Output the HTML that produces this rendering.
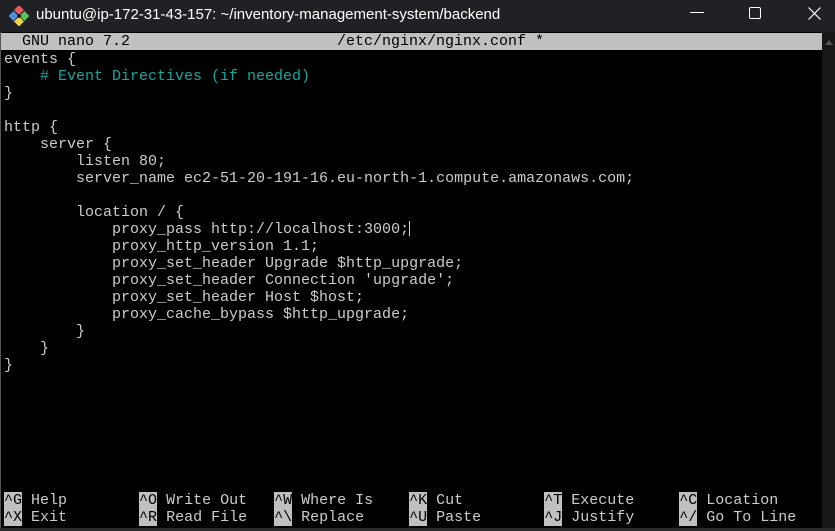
<!DOCTYPE html>
<html><head><meta charset="utf-8"><style>
*{margin:0;padding:0;box-sizing:border-box}
body{width:835px;height:531px;background:#0c0c0c;overflow:hidden;position:relative;font-family:"Liberation Sans",sans-serif}
.title{position:absolute;left:0;top:0;width:835px;height:32px;background:#202124;color:#fff;font-size:15px}
.title .t{position:absolute;left:36px;top:6px}
.term{position:absolute;left:0;top:32px;width:822px;height:496px;background:#000;border-left:1px solid #555}
.sb{position:absolute;left:822px;top:32px;width:13px;height:496px;background:#171717}
.m{font-family:"Liberation Mono",monospace;font-size:15px;line-height:17px;white-space:pre;color:#cccccc;position:absolute}
.hdr{position:absolute;left:1px;top:33px;width:821px;height:17px;background:#c0c0c0}
.k{background:#c0c0c0;color:#000}
.c{color:#13a89e}
</style></head><body>
<div class="title">
<svg style="position:absolute;left:9px;top:6px" width="20" height="20" viewBox="0 0 20 20">
<rect x="6.5" y="0.5" width="7" height="7" transform="rotate(45 10 4)" fill="#e85b5b"/>
<rect x="1" y="6.5" width="7" height="7" transform="rotate(45 4.5 10)" fill="#4a90e2"/>
<rect x="12" y="6.5" width="7" height="7" transform="rotate(45 15.5 10)" fill="#5cc25c"/>
<rect x="6.5" y="12" width="7" height="7" transform="rotate(45 10 15.5)" fill="#f5d547"/>
<circle cx="10" cy="10" r="2" fill="#222"/>
</svg>
<span class="t">ubuntu@ip-172-31-43-157: ~/inventory-management-system/backend</span>
<div style="position:absolute;left:690px;top:12px;width:14px;height:1px;background:#fff"></div>
<div style="position:absolute;left:749px;top:7px;width:12px;height:12px;border:1px solid #fff;border-radius:2px"></div>
<svg style="position:absolute;left:808px;top:7px" width="13" height="13"><path d="M0.5 0.5L12.5 12.5M12.5 0.5L0.5 12.5" stroke="#fff" stroke-width="1.2"/></svg>
</div>
<div class="term"></div>
<div class="sb"><div style="position:absolute;left:3px;top:8px;width:0;height:0;border-left:4px solid transparent;border-right:4px solid transparent;border-bottom:5px solid #555"></div></div>
<div class="hdr"></div>
<div class="m" style="left:4px;top:33px;color:#000">  GNU nano 7.2</div>
<div class="m" style="left:337px;top:33px;color:#000">/etc/nginx/nginx.conf *</div>
<div class="m" style="left:4px;top:51px">events {
    <span class="c"># Event Directives (if needed)</span>
}

http {
    server {
        listen 80;
        server_name ec2-51-20-191-16.eu-north-1.compute.amazonaws.com;

        location / {
            proxy_pass http://localhost:3000;
            proxy_http_version 1.1;
            proxy_set_header Upgrade $http_upgrade;
            proxy_set_header Connection 'upgrade';
            proxy_set_header Host $host;
            proxy_cache_bypass $http_upgrade;
        }
    }
}</div>
<div style="position:absolute;left:409px;top:221px;width:1px;height:15px;background:#ccc"></div>
<div class="m" style="left:4px;top:492px"><span class="k">^G</span> Help        <span class="k">^O</span> Write Out   <span class="k">^W</span> Where Is    <span class="k">^K</span> Cut         <span class="k">^T</span> Execute     <span class="k">^C</span> Location
<span class="k">^X</span> Exit        <span class="k">^R</span> Read File   <span class="k">^\</span> Replace     <span class="k">^U</span> Paste       <span class="k">^J</span> Justify     <span class="k">^/</span> Go To Line</div>
<div style="position:absolute;left:0;top:528px;width:835px;height:3px;background:#2a2a2a"></div>
</body></html>
